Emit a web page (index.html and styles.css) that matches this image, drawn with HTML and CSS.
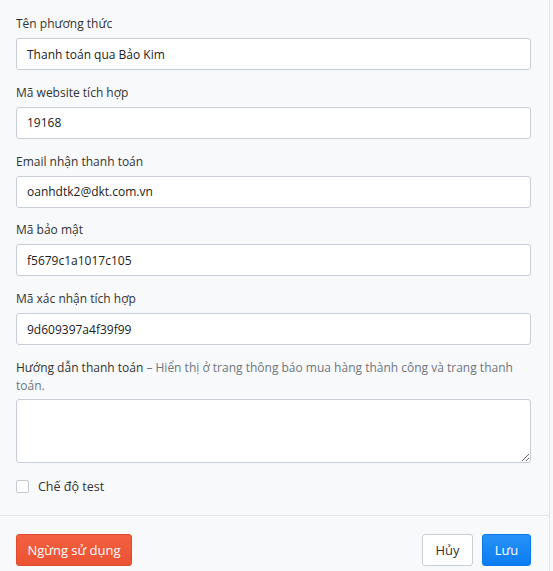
FILE: index.html
```html
<!DOCTYPE html>
<html lang="vi">
<head>
<meta charset="utf-8">
<link rel="stylesheet" href="styles.css">
</head>
<body>
<div class="panel">
  <form class="form">
    <div class="group">
      <label class="label">Tên phương thức</label>
      <input class="input" type="text" value="Thanh toán qua Bảo Kim">
    </div>
    <div class="group">
      <label class="label">Mã website tích hợp</label>
      <input class="input" type="text" value="19168">
    </div>
    <div class="group">
      <label class="label">Email nhận thanh toán</label>
      <input class="input" type="text" value="oanhdtk2@dkt.com.vn">
    </div>
    <div class="group">
      <label class="label">Mã bảo mật</label>
      <input class="input" type="text" value="f5679c1a1017c105">
    </div>
    <div class="group">
      <label class="label">Mã xác nhận tích hợp</label>
      <input class="input" type="text" value="9d609397a4f39f99">
    </div>
    <div class="group">
      <label class="label">Hướng dẫn thanh toán <span class="hint">– Hiển thị ở trang thông báo mua hàng thành công và trang thanh toán.</span></label>
      <textarea class="textarea"></textarea>
    </div>
    <label class="check">
      <span class="box"></span>
      <span class="check-text">Chế độ test</span>
    </label>
  </form>
  <div class="footer">
    <button class="btn btn-danger" type="button">Ngừng sử dụng</button>
    <div class="actions">
      <button class="btn btn-default" type="button">Hủy</button>
      <button class="btn btn-primary" type="button">Lưu</button>
    </div>
  </div>
</div>
</body>
</html>
```
FILE: styles.css
```css
html, body {
  margin: 0;
  padding: 0;
  background: #f8f9fb;
}
body {
  font-family: "Open Sans", "Noto Sans", sans-serif;
  font-size: 12px;
  color: #333;
}
.panel {
  width: 550px;
  border-right: 1px solid #e4e6ea;
  min-height: 571px;
  box-sizing: border-box;
}
.form {
  padding: 15px 18px 18px 16px;
}
.group {
  display: flex;
  flex-direction: column;
  margin-bottom: 13.75px;
}
.label {
  line-height: 18px;
  margin-bottom: 5px;
  color: #333;
}
.hint {
  color: #6f767d;
}
.input {
  height: 32px;
  box-sizing: border-box;
  border: 1px solid #c9ced6;
  border-radius: 3px;
  background: #fff;
  padding: 0 10px;
  font-family: inherit;
  font-size: 12px;
  color: #222;
  margin: 0;
}
.textarea {
  height: 64px;
  box-sizing: border-box;
  border: 1px solid #c9ced6;
  border-radius: 3px;
  background: #fff;
  margin: -1px 0 0;
  resize: vertical;
  font-family: inherit;
}
.check {
  display: flex;
  align-items: center;
  gap: 9px;
  height: 20px;
}
.box {
  width: 13px;
  height: 13px;
  box-sizing: border-box;
  border: 1px solid #c4c8ce;
  border-radius: 2px;
  background: #fff;
}
.check-text {
  font-size: 12.5px;
}
.footer {
  border-top: 1px solid #e4e6ea;
  padding: 18px 18px 0 16px;
  display: flex;
  justify-content: space-between;
}
.actions {
  display: flex;
  gap: 9px;
}
.btn {
  height: 32px;
  box-sizing: border-box;
  border-radius: 3px;
  font-family: inherit;
  font-size: 13px;
  padding: 0;
  margin: 0;
  cursor: pointer;
  white-space: nowrap;
}
.btn-danger {
  width: 116px;
  color: #fff;
  background: linear-gradient(#f2603f, #ea5333);
  border: 1px solid #e0492b;
}
.btn-default {
  width: 51px;
  color: #333;
  background: #fff;
  border: 1px solid #c9ced6;
}
.btn-primary {
  width: 49px;
  color: #fff;
  background: linear-gradient(#2792f8, #0b7cf0);
  border: 1px solid #0b78ea;
}
```
